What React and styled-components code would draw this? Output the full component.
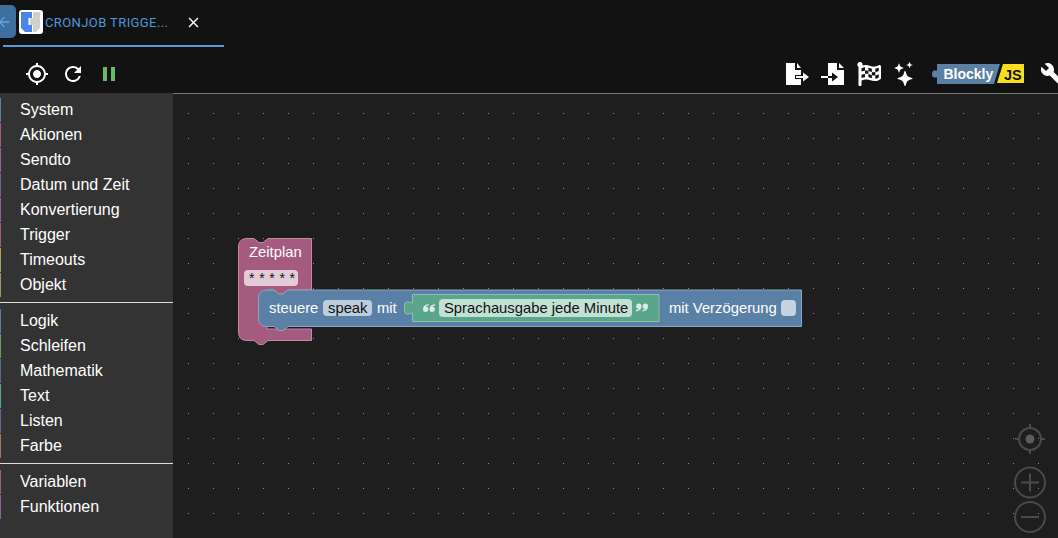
import React from 'react';
import styled, { createGlobalStyle } from 'styled-components';
import { MdArrowBack, MdClose, MdGpsFixed, MdRefresh, MdPause, MdBuild } from 'react-icons/md';
import { FaFlagCheckered } from 'react-icons/fa';
import { BsStars } from 'react-icons/bs';

const GlobalStyle = createGlobalStyle`
  html, body {
    margin: 0;
    height: 100%;
    background: #121212;
    overflow: hidden;
  }
`;

const Page = styled.div`
  width: 1058px;
  height: 538px;
  display: flex;
  flex-direction: column;
  overflow: hidden;
  font-family: "Liberation Sans", Arial, sans-serif;
`;

const TabBar = styled.div`
  height: 47px;
  flex: none;
  display: flex;
  background: #121212;
`;

const BackButton = styled.div`
  width: 16px;
  height: 33px;
  margin-top: 5px;
  flex: none;
  display: flex;
  align-items: center;
  overflow: hidden;
  background: #3f6f9d;
  border-radius: 0 5px 5px 0;
  color: #64a8e8;
  font-size: 16px;
  svg {
    flex: none;
    margin-left: -4px;
  }
`;

const Tab = styled.div`
  width: 221px;
  height: 47px;
  margin-left: -13px;
  padding-left: 16px;
  padding-bottom: 1px;
  box-sizing: border-box;
  display: flex;
  align-items: center;
  border-bottom: 2px solid #5a9ad8;
`;

const TabTitle = styled.span`
  margin-left: 2px;
  width: 137px;
  font-family: Roboto, sans-serif;
  font-size: 13px;
  letter-spacing: 0.4px;
  white-space: nowrap;
  color: #4f96dc;
`;

const CloseIcon = styled(MdClose)`
  color: #fff;
  font-size: 17px;
  margin-left: 3px;
`;

const Toolbar = styled.div`
  height: 46px;
  flex: none;
  box-sizing: border-box;
  display: flex;
  align-items: center;
  background: #121212;
  padding: 8px 0 0 25px;
`;

const LeftTools = styled.div`
  display: flex;
  align-items: center;
  gap: 12px;
`;

const ToolIcon = styled.span`
  width: 24px;
  height: 24px;
  display: flex;
  align-items: center;
  justify-content: center;
  color: ${p => p.$color || '#fff'};
  font-size: 24px;
`;

const RightTools = styled.div`
  margin-left: auto;
  margin-right: -6px;
  display: flex;
  align-items: center;
  gap: 12px;
`;

const LogoSlot = styled.div`
  margin: 0 4px 0 3px;
  line-height: 0;
`;

const Main = styled.div`
  flex: 1;
  display: flex;
  min-height: 0;
`;

const Toolbox = styled.div`
  width: 173px;
  flex: none;
  background: #333;
  padding-top: 5px;
  box-sizing: border-box;
`;

const ToolboxItem = styled.div`
  height: 24px;
  margin-bottom: 1px;
  padding-left: 19px;
  border-left: 1px solid ${p => p.$color};
  font-size: 16px;
  line-height: 24px;
  color: #fff;
`;

const Separator = styled.div`
  height: 1px;
  background: #ddd;
  margin: 5px 0 6px;
`;

const Workspace = styled.div`
  position: relative;
  flex: 1;
  border-top: 1px solid #777;
  background-color: #1e1e1e;
  background-image: radial-gradient(circle at 0.5px 0.5px, #8a8a8a 0.7px, transparent 0.8px);
  background-size: 25px 25px;
  background-position: 15px 19px;
`;

const BlockCanvas = styled.svg`
  position: absolute;
  left: 0;
  top: 0;
  font-family: "Liberation Sans", Arial, sans-serif;
  font-size: 14.8px;
`;

const Controls = styled.svg`
  position: absolute;
  right: 11px;
  bottom: 3px;
`;

const toolboxGroups = [
  [
    ['System', '#5b80a5'],
    ['Aktionen', '#a55b80'],
    ['Sendto', '#a55b99'],
    ['Datum und Zeit', '#7c5ba5'],
    ['Konvertierung', '#995ba5'],
    ['Trigger', '#a55b80'],
    ['Timeouts', '#a5a55b'],
    ['Objekt', '#a5945b'],
  ],
  [
    ['Logik', '#5b80a5'],
    ['Schleifen', '#5ba55b'],
    ['Mathematik', '#5b67a5'],
    ['Text', '#5ba58c'],
    ['Listen', '#745ba5'],
    ['Farbe', '#a5745b'],
  ],
  [
    ['Variablen', '#a55b80'],
    ['Funktionen', '#995ba5'],
  ],
];

const ExportIcon = () => (
  <svg width="24" height="24" viewBox="0 0 24 24" fill="#fff">
    <path d="M1 1H10V8H16V13H10V17H16V23H1Z" />
    <path d="M12 1L16 6H12Z" />
    <path d="M11 14H18V10.500L24 15L18 19.500V16H11Z" />
  </svg>
);

const ImportIcon = () => (
  <svg width="24" height="24" viewBox="0 0 24 24">
    <path d="M7 1H16V8H23V23H7V16H9V14H7Z" fill="#fff" />
    <path d="M18 1L23 6H18Z" fill="#fff" />
    <path d="M0 14H7V16H0Z" fill="#fff" />
    <path d="M7 14H11V10.500L17 15L11 19.500V16H7Z" fill="#121212" />
  </svg>
);

const BlocklyLogo = () => (
  <svg width="92" height="20" viewBox="0 0 92 20" style={{ display: 'block' }}>
    <path d="M5 0H68L62 20H5V13.500H2.500Q0 13.500 0 10Q0 6.500 2.500 6.500H5Z" fill="#5b80a5" />
    <path d="M71 0H92V19H65Z" fill="#f7df1e" />
    <text x="11.500" y="15" fontFamily="Liberation Sans, sans-serif" fontSize="14" fontWeight="700" fill="#fff">Blockly</text>
    <text x="72" y="15.500" fontFamily="Liberation Sans, sans-serif" fontSize="14.500" fontWeight="700" fill="#111">JS</text>
  </svg>
);

const TabLogo = () => (
  <svg width="24" height="24" viewBox="0 0 24 24" style={{ flex: 'none' }}>
    <rect width="24" height="24" rx="3" fill="#fff" />
    <path d="M2 2H13V8H9.500V15H13V22H6L2 18Z" fill="#4a86e8" />
    <path d="M14 2H21V18L17 22H14V15H11V8H14Z" fill="#cfcfcf" />
  </svg>
);

// the quote images of a Blockly text block
const QuoteMark = ({ x, y, flip }) => (
  <g transform={flip ? `translate(${x} ${y}) rotate(180 5.500 4)` : `translate(${x} ${y})`} fill="#d8ece4">
    <path d="M5.500 0Q0 1 0 5.300A2.700 2.700 0 1 0 3 2.700Q3 2 5.500 1.500Z" />
    <path d="M12 0Q6.500 1 6.500 5.300A2.700 2.700 0 1 0 9.500 2.700Q9.500 2 12 1.500Z" />
  </g>
);

const Blocks = () => (
  <BlockCanvas width="885" height="444">
    {/* Zeitplan */}
    <path
      d="M74 144.500H81L86 148.500H90L95 144.500H138.500V196H115L110 200H106L101 196H94V235H138.500V246.500H95L90 250.500H86L81 246.500H74Q65.500 246.500 65.500 238V153Q65.500 144.500 74 144.500Z"
      fill="#a55b80"
      stroke="#c08ca6"
    />
    <rect x="71" y="176" width="54" height="16" rx="4" fill="#e3cbd7" />
    <text x="76" y="163" fill="#fff">Zeitplan</text>
    <text x="76" y="189" fontSize="14" fill="#111" letterSpacing="0.4">* * * * *</text>

    {/* steuere */}
    <path
      d="M94 196H101L106 200H110L115 196H628.500V232.500H115L110 236.500H106L101 232.500H94Q85.500 232.500 85.500 224V204.500Q85.500 196 94 196Z"
      fill="#5b80a5"
      stroke="#8ca6c0"
    />
    <rect x="150" y="206" width="49" height="16" rx="4" fill="#bdcddd" />
    <text x="96" y="219" fill="#fff">steuere</text>
    <text x="155" y="219" fill="#111">speak</text>
    <text x="204" y="219" fill="#fff">mit</text>
    <text x="496" y="219" fill="#fff">mit Verzögerung</text>
    <rect x="608" y="206" width="15" height="16" rx="4" fill="#c6d2e0" />

    {/* Text */}
    <path
      d="M239.500 200.500H486V227.500H239.500V219Q231.500 222 231.500 217V211Q231.500 206 239.500 209Z"
      fill="#5ba58c"
      stroke="#8cc0ae"
    />
    <rect x="266" y="205" width="193" height="18" rx="4" fill="#c3e0d5" />
    <text x="271" y="219" fill="#111">Sprachausgabe jede Minute</text>
    <QuoteMark x={250} y={210} />
    <QuoteMark x={464} y={209.500} flip />
  </BlockCanvas>
);

const ZoomControls = () => (
  <Controls width="34" height="112" viewBox="0 0 34 112" fill="none" stroke="#4a4a4a" strokeWidth="2">
    <circle cx="17" cy="16" r="11" />
    <path d="M17 1V5M17 27V31M2 16H6M28 16H32" />
    <circle cx="17" cy="16" r="4.500" fill="#5c5c5c" stroke="none" />
    <circle cx="17" cy="59.500" r="15" />
    <path d="M8 59.500H26M17 50.500V68.500" />
    <circle cx="17" cy="94" r="15" />
    <path d="M8 94H26" />
  </Controls>
);

export default function App() {
  return (
    <>
      <GlobalStyle />
      <Page>
        <TabBar>
          <BackButton><MdArrowBack /></BackButton>
          <Tab>
            <TabLogo />
            <TabTitle>CRONJOB TRIGGE...</TabTitle>
            <CloseIcon />
          </Tab>
        </TabBar>
        <Toolbar>
          <LeftTools>
            <ToolIcon><MdGpsFixed /></ToolIcon>
            <ToolIcon><MdRefresh /></ToolIcon>
            <ToolIcon $color="#66bb6a"><MdPause /></ToolIcon>
          </LeftTools>
          <RightTools>
            <ToolIcon><ExportIcon /></ToolIcon>
            <ToolIcon><ImportIcon /></ToolIcon>
            <ToolIcon><FaFlagCheckered /></ToolIcon>
            <ToolIcon><BsStars /></ToolIcon>
            <LogoSlot><BlocklyLogo /></LogoSlot>
            <ToolIcon><MdBuild /></ToolIcon>
          </RightTools>
        </Toolbar>
        <Main>
          <Toolbox>
            {toolboxGroups.map((group, i) => (
              <React.Fragment key={i}>
                {i > 0 && <Separator />}
                {group.map(([name, color]) => (
                  <ToolboxItem key={name} $color={color}>{name}</ToolboxItem>
                ))}
              </React.Fragment>
            ))}
          </Toolbox>
          <Workspace>
            <Blocks />
            <ZoomControls />
          </Workspace>
        </Main>
      </Page>
    </>
  );
}
